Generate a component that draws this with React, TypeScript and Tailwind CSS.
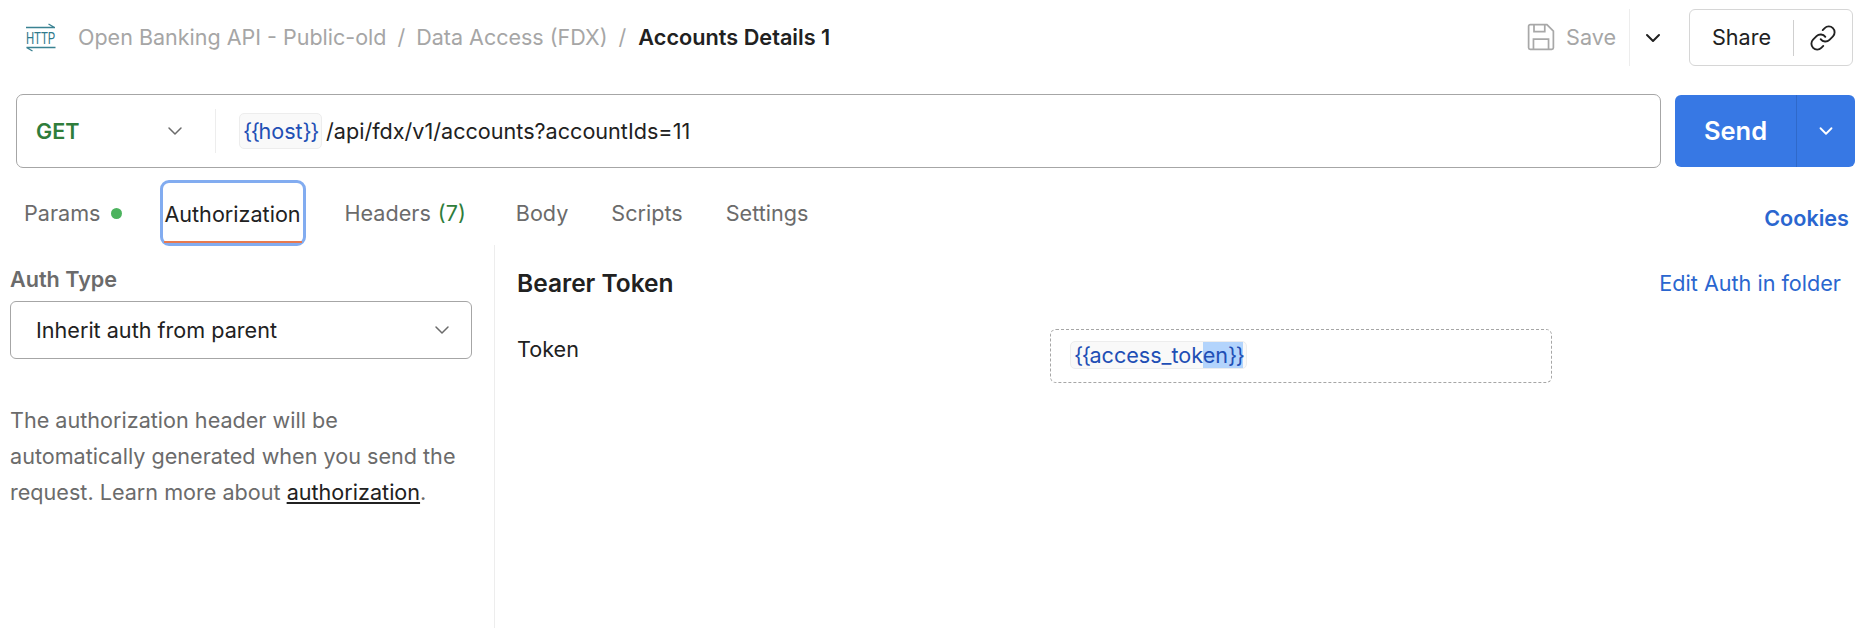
import { ChevronDown, Link } from 'lucide-react';

function HttpIcon() {
  return (
    <svg width="32" height="30" viewBox="0 0 32 30" fill="none" stroke="#3a8292" strokeWidth="1.4" className="shrink-0">
      <path d="M1 4.500h29M23.500 1l6 3.500" />
      <text transform="translate(15.500 21) scale(0.68 1)" textAnchor="middle" fill="#2f7a8c" stroke="none" fontSize="17" fontFamily="Roboto, sans-serif">
        HTTP
      </text>
      <path d="M1.500 24.500h29M1.500 24.500l6 3.500" />
    </svg>
  );
}

function SaveIcon() {
  return (
    <svg width="28" height="28" viewBox="0 0 26 26" fill="none" stroke="#a8a8a8" strokeWidth="1.600" className="shrink-0">
      <path d="M1.500 3a1.500 1.500 0 0 1 1.500-1.500h15.500l6 6v15.500a1.500 1.500 0 0 1-1.500 1.500h-20a1.500 1.500 0 0 1-1.500-1.500z" />
      <path d="M6.500 1.500v6.500h10v-6.500M6 24.500v-9.500h14v9.500" />
    </svg>
  );
}

function Tab({ label, extra }: { label: string; extra?: React.ReactNode }) {
  return (
    <div className="flex items-center gap-[10px] pt-[1px] text-[#6b6b6b]">
      <span>{label}</span>
      {extra}
    </div>
  );
}

export default function App() {
  return (
    <div className="h-[628px] w-[1866px] overflow-hidden bg-white text-[21.6px] text-[#212121] font-['Inter',sans-serif]">
      {/* top bar */}
      <div className="flex h-[74px] items-center pl-[25px] pr-[13px] pt-[1px]">
        <HttpIcon />
        <div className="ml-[21px] flex items-center gap-[11px] text-[21.5px] text-[#a6a6a6]">
          <span>Open Banking API - Public-old</span>
          <span>/</span>
          <span>Data Access (FDX)</span>
          <span>/</span>
          <span className="ml-[1px] text-[21.7px] font-semibold text-[#212121]">Accounts Details 1</span>
        </div>
        <div className="ml-auto flex items-center">
          <div className="flex items-center gap-[11px] text-[#a6a6a6]">
            <SaveIcon />
            <span>Save</span>
          </div>
          <div className="ml-[13px] flex h-[57px] w-[46px] items-center justify-center border-l border-[#ededed]">
            <ChevronDown size={24} strokeWidth={2} />
          </div>
          <div className="ml-[14px] flex h-[57px] w-[164px] items-center rounded-[6px] border border-[#d6d6d6]">
            <span className="w-[103px] text-center">Share</span>
            <div className="flex h-[36px] flex-1 items-center justify-center border-l border-[#cfcfcf]">
              <Link size={28} strokeWidth={1.600} />
            </div>
          </div>
        </div>
      </div>

      {/* url bar */}
      <div className="mt-[20px] flex gap-[14px] pl-[16px] pr-[11px]">
        <div className="flex h-[74px] flex-1 items-center rounded-[7px] border border-[#a6a6a6]">
          <div className="flex h-[44px] w-[199px] items-center justify-between border-r border-[#ededed] pl-[19px] pr-[28px]">
            <span className="font-semibold text-[#2f7d3b]">GET</span>
            <ChevronDown size={24} strokeWidth={1.500} className="text-[#6b6b6b]" />
          </div>
          <div className="ml-[23px] flex items-center gap-[4px]">
            <span className="rounded-[5px] border border-[#ededed] bg-[#f9f9f9] px-[3px] py-[1px] text-[#1f4fb5]">
              <span className="tracking-[-1.5px]">{'{{'}</span>host<span className="tracking-[-1.5px]">{'}}'}</span>
            </span>
            <span>/api/fdx/v1/accounts?accountIds=11</span>
          </div>
        </div>
        <div className="mt-[1px] flex h-[72px] w-[180px] items-center rounded-[6px] bg-[#3778e4] text-white">
          <span className="w-[121px] pt-[1px] text-center text-[25.5px] font-semibold">Send</span>
          <div className="flex h-full flex-1 items-center justify-center border-l border-[#2f69c9]">
            <ChevronDown size={22} strokeWidth={2} />
          </div>
        </div>
      </div>

      {/* tabs */}
      <div className="mt-[13px] flex h-[64px] items-center pl-[24px] pr-[17px]">
        <Tab label="Params" extra={<span className="h-[11px] w-[11px] rounded-full bg-[#4cb35e]" />} />
        <div className="ml-[38px] flex h-[66px] w-[146px] flex-col justify-end rounded-[9px] border-[3px] border-[#82acf0] px-[1px]">
          <div className="flex h-[58px] items-center justify-center whitespace-nowrap border-b-2 border-[#e8794f] pt-[2px]">Authorization</div>
        </div>
        <div className="ml-[39px] flex gap-[50px]">
          <Tab label="Headers" extra={<span className="-ml-[3px] text-[#2f7d3b]">(7)</span>} />
          <div className="flex gap-[43px]">
            <Tab label="Body" />
            <Tab label="Scripts" />
            <Tab label="Settings" />
          </div>
        </div>
        <span className="ml-auto mt-[11px] text-[21.6px] font-semibold text-[#2a66cf]">Cookies</span>
      </div>

      {/* body */}
      <div className="flex h-[386px]">
        <div className="w-[495px] shrink-0 border-r border-[#ededed] pl-[10px] pr-[22px] pt-[20px]">
          <div className="font-semibold leading-[28px] text-[#6b6b6b]">Auth Type</div>
          <div className="mt-[8px] flex h-[58px] items-center justify-between rounded-[6px] border border-[#a6a6a6] pl-[25px] pr-[17px]">
            <span>Inherit auth from parent</span>
            <ChevronDown size={24} strokeWidth={1.500} className="text-[#6b6b6b]" />
          </div>
          <p className="mt-[43px] leading-[36px] text-[#6b6b6b]">
            The authorization header will be automatically generated when you send the request. Learn more about{' '}
            <span className="text-[#212121] underline underline-offset-2">authorization</span>.
          </p>
        </div>
        <div className="flex-1 pl-[22px] pr-[25px] pt-[22px]">
          <div className="flex items-center justify-between">
            <span className="text-[24.5px] font-semibold leading-[32px]">Bearer Token</span>
            <span className="text-[#2a66cf]">Edit Auth in folder</span>
          </div>
          <div className="mt-[30px] flex items-start">
            <span className="mt-[6px] w-[533px] leading-[28px]">Token</span>
            <div className="flex h-[54px] w-[502px] items-center rounded-[6px] border border-dashed border-[#a6a6a6] pl-[19px]">
              <span className="mb-[3px] rounded-[5px] border border-[#ededed] bg-[#f9f9f9] px-[3px] leading-[26px] text-[#1f4fb5]">
                <span className="tracking-[-1.5px]">{'{{'}</span>access_tok
                <span className="bg-[#b3d4fc]">
                  en<span className="tracking-[-1.5px]">{'}}'}</span>
                </span>
              </span>
            </div>
          </div>
        </div>
      </div>
    </div>
  );
}
